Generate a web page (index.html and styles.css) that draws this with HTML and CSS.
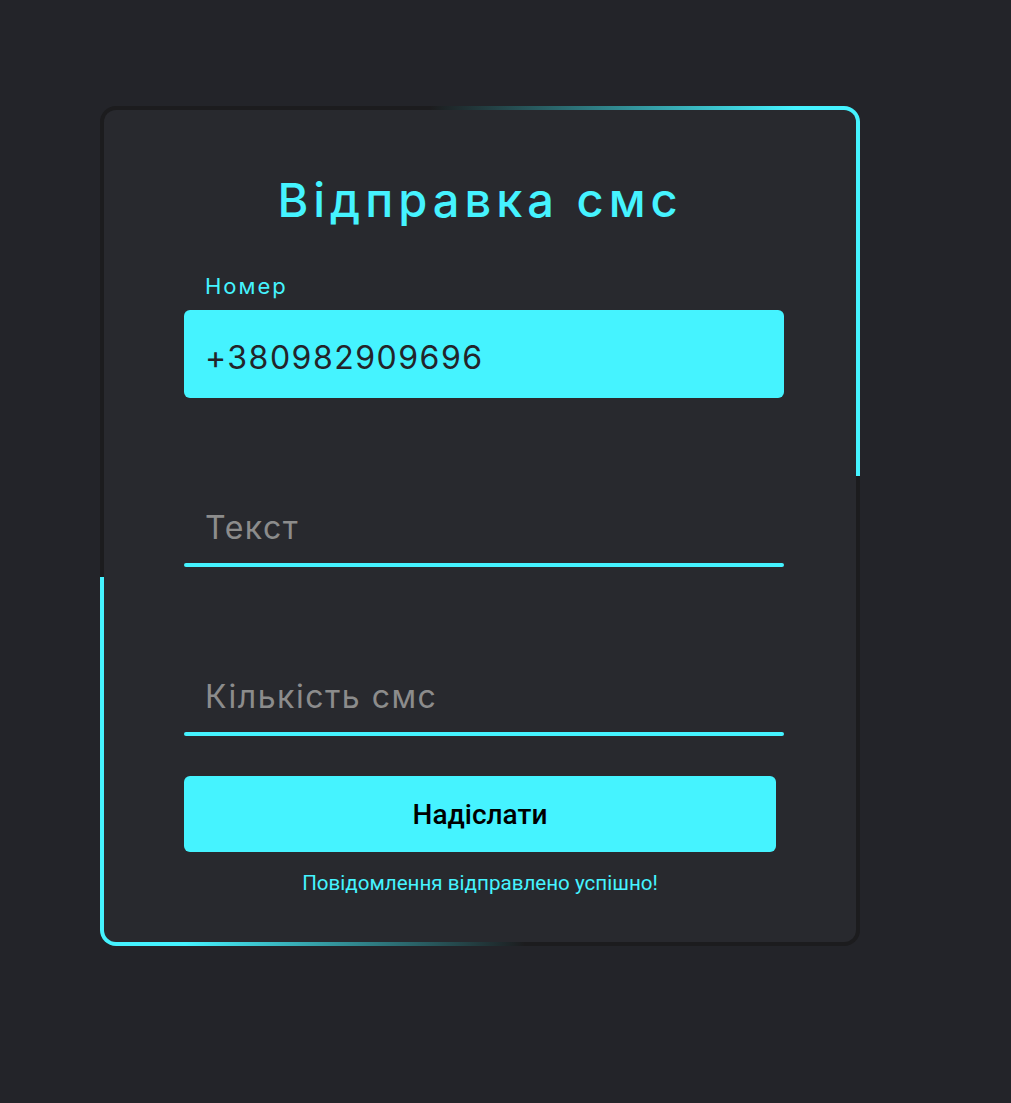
FILE: index.html
```html
<!DOCTYPE html>
<html lang="uk">
<head>
<meta charset="utf-8">
<title>Відправка смс</title>
<link rel="stylesheet" href="styles.css">
</head>
<body>
<main class="page">
  <div class="card">
    <form class="card-inner">
      <h1 class="title">Відправка смс</h1>
      <div class="field">
        <label class="label" for="phone">Номер</label>
        <input class="input input-filled" id="phone" type="text" value="+380982909696">
      </div>
      <div class="field field-line">
        <input class="input" type="text" placeholder="Текст">
        <span class="line"></span>
      </div>
      <div class="field field-line">
        <input class="input" type="text" placeholder="Кількість смс">
        <span class="line"></span>
      </div>
      <button class="button" type="button">Надіслати</button>
      <p class="message">Повідомлення відправлено успішно!</p>
    </form>
  </div>
</main>
</body>
</html>
```
FILE: styles.css
```css
html, body {
  margin: 0;
  padding: 0;
}
body {
  background: #232429;
  font-family: Inter, "Noto Sans", sans-serif;
  min-height: 1103px;
}
.page {
  padding: 106px 0 0 100px;
}
.card {
  position: relative;
  width: 760px;
  box-sizing: border-box;
  padding: 4px;
  border-radius: 16px;
  background: #1c1c1e;
}
.card::before {
  content: "";
  position: absolute;
  top: 0;
  right: 0;
  width: 430px;
  height: 370px;
  border-top-right-radius: 16px;
  background: linear-gradient(to right, rgba(69, 243, 255, 0) 0%, #45f3ff 85%);
}
.card::after {
  content: "";
  position: absolute;
  bottom: 0;
  left: 0;
  width: 425px;
  height: 369px;
  border-bottom-left-radius: 16px;
  background: linear-gradient(to left, rgba(69, 243, 255, 0) 0%, #45f3ff 80%);
}
.card-inner {
  position: relative;
  z-index: 1;
  display: flex;
  flex-direction: column;
  align-items: flex-start;
  padding: 61px 72px 47px 80px;
  border-radius: 12px;
  background: #28292e;
}
.title {
  align-self: stretch;
  margin: 0 0 45px -8px;
  font-size: 47px;
  font-weight: 500;
  line-height: 57px;
  letter-spacing: 5px;
  text-align: center;
  color: #45f3ff;
}
.field {
  display: flex;
  flex-direction: column;
  width: 600px;
}
.field-line {
  margin-top: 81px;
}
.label {
  margin: 0 0 10px 21px;
  font-size: 22px;
  line-height: 27px;
  letter-spacing: 2px;
  color: #45f3ff;
}
.input {
  box-sizing: border-box;
  width: 100%;
  height: 84px;
  margin: 0;
  padding: 13px 21px 0;
  border: none;
  outline: none;
  background: transparent;
  font-family: Inter, "Noto Sans", sans-serif;
  font-size: 32px;
  letter-spacing: 1.5px;
  color: #23242a;
}
.input::placeholder {
  color: #8c8c8c;
}
.input-filled {
  height: 88px;
  padding-top: 6px;
  border-radius: 6px;
  background: #45f3ff;
}
.line {
  display: block;
  height: 4px;
  border-radius: 4px;
  background: #45f3ff;
}
.button {
  margin-top: 40px;
  width: 592px;
  height: 76px;
  border: none;
  border-radius: 6px;
  background: #45f3ff;
  font-family: Roboto, "Liberation Sans", sans-serif;
  font-size: 28px;
  font-weight: 500;
  color: #000;
}
.message {
  align-self: stretch;
  margin: 20px 0 0 -8px;
  font-family: Roboto, "Liberation Sans", sans-serif;
  font-size: 20.6px;
  line-height: 23px;
  text-align: center;
  color: #45f3ff;
}
```
